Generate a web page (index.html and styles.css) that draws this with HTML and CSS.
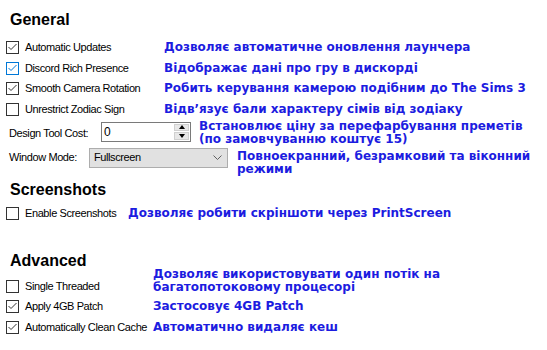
FILE: index.html
```html
<!DOCTYPE html>
<html lang="uk">
<head>
    <meta charset="UTF-8">
    <meta name="viewport" content="width=device-width, initial-scale=1.0">
    <title>Launcher Settings</title>
    <link rel="stylesheet" href="styles.css">
</head>
<body>
    <div class="panel">
        <!-- General -->
        <h2 class="section-title general-title">General</h2>
        <div class="row general">
            <span class="check"><svg viewBox="0 0 11 11"><polyline points="1.5,5 4,7.5 9.5,2"/></svg></span>
            <span class="label">Automatic Updates</span>
            <span class="desc">Дозволяє автоматичне оновлення лаунчера</span>
        </div>
        <div class="row general">
            <span class="check focused"><svg viewBox="0 0 11 11"><polyline points="1.5,5 4,7.5 9.5,2"/></svg></span>
            <span class="label">Discord Rich Presence</span>
            <span class="desc">Відображає дані про гру в дискорді</span>
        </div>
        <div class="row general">
            <span class="check"><svg viewBox="0 0 11 11"><polyline points="1.5,5 4,7.5 9.5,2"/></svg></span>
            <span class="label">Smooth Camera Rotation</span>
            <span class="desc">Робить керування камерою подібним до The Sims 3</span>
        </div>
        <div class="row general">
            <span class="check"></span>
            <span class="label">Unrestrict Zodiac Sign</span>
            <span class="desc">Відв’язує бали характеру сімів від зодіаку</span>
        </div>

        <div class="row field design">
            <span class="field-label">Design Tool Cost:</span>
            <div class="spin-input">
                <span class="spin-value">0</span>
                <span class="spin-buttons">
                    <span class="spin-btn"><span class="arrow-up"></span></span>
                    <span class="spin-btn"><span class="arrow-down"></span></span>
                </span>
            </div>
            <span class="desc">Встановлює ціну за перефарбування преметів<br>(по замовчуванню коштує 15)</span>
        </div>
        <div class="row field window">
            <span class="field-label">Window Mode:</span>
            <div class="select">
                <span class="select-value">Fullscreen</span>
                <svg class="chevron" viewBox="0 0 9 5"><polyline points="0.5,0.5 4.5,4.5 8.5,0.5"/></svg>
            </div>
            <span class="desc">Повноекранний, безрамковий та віконний<br>режими</span>
        </div>

        <!-- Screenshots -->
        <h2 class="section-title screens-title">Screenshots</h2>
        <div class="row screens">
            <span class="check"></span>
            <span class="label">Enable Screenshots</span>
            <span class="desc">Дозволяє робити скріншоти через PrintScreen</span>
        </div>

        <!-- Advanced -->
        <h2 class="section-title advanced-title">Advanced</h2>
        <div class="row advanced">
            <span class="check"></span>
            <span class="label">Single Threaded</span>
            <span class="desc desc-raised">Дозволяє використовувати один потік на<br>багатопотоковому процесорі</span>
        </div>
        <div class="row advanced">
            <span class="check"><svg viewBox="0 0 11 11"><polyline points="1.5,5 4,7.5 9.5,2"/></svg></span>
            <span class="label">Apply 4GB Patch</span>
            <span class="desc">Застосовує 4GB Patch</span>
        </div>
        <div class="row advanced">
            <span class="check"><svg viewBox="0 0 11 11"><polyline points="1.5,5 4,7.5 9.5,2"/></svg></span>
            <span class="label">Automatically Clean Cache</span>
            <span class="desc">Автоматично видаляє кеш</span>
        </div>
    </div>
</body>
</html>
```

FILE: styles.css
```css
/* Base */
body {
    margin: 0;
    padding: 0;
    background: #ffffff;
    font-family: 'Liberation Sans', Arial, sans-serif;
    color: #000;
}

.panel {
    display: flex;
    flex-direction: column;
    width: 547px;
    height: 350px;
    overflow: hidden;
}

/* Section headings */
.section-title {
    margin: 0;
    padding-left: 10px;
    font-size: 16px;
    font-weight: 700;
    line-height: 20px;
    height: 20px;
}

.general-title {
    margin-top: 9.5px;
    margin-bottom: 7.75px;
}

.screens-title {
    margin-top: 8.25px;
    margin-bottom: 3.75px;
}

.advanced-title {
    margin-top: 26.75px;
    margin-bottom: 5.25px;
}

/* Rows */
.row {
    display: flex;
    align-items: center;
    padding-left: 6px;
    white-space: nowrap;
}

.row.general,
.row.screens {
    height: 20.5px;
}

.row.advanced {
    height: 20.75px;
}

.row.field {
    padding-left: 9px;
}

.row.design {
    height: 24.5px;
}

.row.window {
    height: 27.5px;
}

/* Checkbox */
.check {
    box-sizing: border-box;
    width: 13px;
    height: 13px;
    border: 1px solid #333333;
    background: #fff;
    margin-right: 6px;
    flex-shrink: 0;
}

.check svg {
    display: block;
    width: 11px;
    height: 11px;
}

.check polyline {
    fill: none;
    stroke: #333333;
    stroke-width: 1;
}

.check.focused {
    border-color: #0078d7;
}

.check.focused polyline {
    stroke: #0078d7;
}

/* Labels */
.label,
.field-label {
    font-size: 11px;
    letter-spacing: -0.4px;
    line-height: 13px;
}

.general .label { width: 139px; }
.screens .label { width: 103px; }
.advanced .label { width: 128px; }

.design .field-label {
    width: 92px;
    margin-top: 4px;
}

.window .field-label {
    width: 80px;
}

/* Blue descriptions */
.desc {
    font-family: 'DejaVu Sans', 'Liberation Sans', sans-serif;
    font-weight: 700;
    font-size: 12px;
    line-height: 13px;
    color: #1c1ce0;
}

.design .desc {
    margin-left: 8px;
    margin-top: 3.5px;
}

.window .desc {
    margin-left: 9px;
    margin-top: 11.5px;
}

.desc-raised {
    margin-bottom: 9.4px;
}

/* Numeric up-down */
.spin-input {
    box-sizing: border-box;
    display: flex;
    align-items: center;
    justify-content: space-between;
    width: 90px;
    height: 20px;
    border: 1px solid #7a7a7a;
    background: #fff;
    padding: 1px 1px 1px 2px;
}

.spin-value {
    font-size: 12px;
    line-height: 14px;
}

.spin-buttons {
    display: flex;
    flex-direction: column;
    gap: 1px;
    width: 15px;
    height: 16px;
}

.spin-btn {
    flex: 1;
    display: flex;
    align-items: center;
    justify-content: center;
    background: #e8e8e8;
    border: 1px solid #d0d0d0;
    box-sizing: border-box;
}

.arrow-up,
.arrow-down {
    width: 0;
    height: 0;
    border-left: 3.5px solid transparent;
    border-right: 3.5px solid transparent;
}

.arrow-up {
    border-bottom: 4px solid #000;
}

.arrow-down {
    border-top: 4px solid #000;
}

/* Combo box */
.select {
    box-sizing: border-box;
    display: flex;
    align-items: center;
    justify-content: space-between;
    width: 139px;
    height: 20px;
    border: 1px solid #adadad;
    background: #e1e1e1;
    padding: 0 5px 0 4px;
}

.select-value {
    font-size: 11px;
    letter-spacing: -0.4px;
    line-height: 13px;
}

.chevron {
    width: 9px;
    height: 5px;
}

.chevron polyline {
    fill: none;
    stroke: #606060;
    stroke-width: 1;
}
```
